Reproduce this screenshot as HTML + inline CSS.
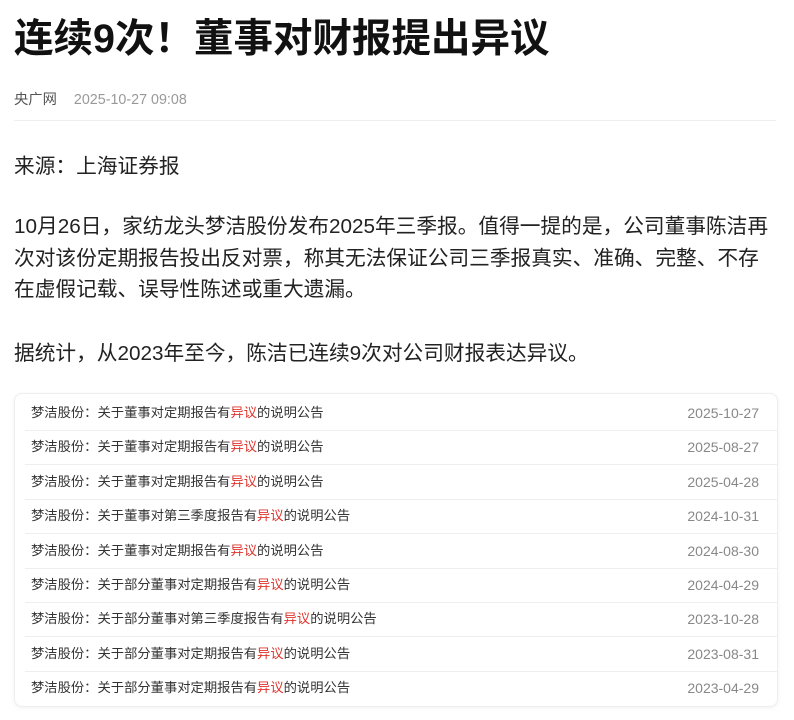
<!DOCTYPE html>
<html><head><meta charset="utf-8"><style>
body{margin:0;background:#fff;width:794px;height:720px;overflow:hidden;font-family:"Liberation Sans","Noto Sans CJK SC",sans-serif;}
.t{position:absolute;left:14px;top:7px;font-size:39.5px;font-weight:bold;color:#111;white-space:nowrap}
.meta{position:absolute;left:14px;top:88px;font-size:14.3px;color:#555}
.meta span{color:#999;margin-left:17px}
.hr{position:absolute;left:14px;right:18px;top:120px;border-top:1px solid #eee}
.p{position:absolute;left:14px;width:790px;font-size:20.7px;color:#222;line-height:31.5px;white-space:nowrap}
.card{position:absolute;left:14px;top:393px;width:762px;height:312px;border:1px solid #eee;border-radius:8px;box-shadow:0 1px 4px rgba(0,0,0,0.06)}
.row{position:absolute;left:10px;right:0;height:34px;border-bottom:1px solid #eee;font-size:13.3px;color:#333;line-height:34px;padding-left:6px}
.row:last-child{border-bottom:none}
.row b{font-weight:normal;color:#e0342d}
.row i{font-style:normal;position:absolute;right:18px;color:#888;font-size:14px}
</style></head><body>
<div class="t">连续9次！董事对财报提出异议</div>
<div class="meta">央广网<span>2025-10-27 09:08</span></div>
<div class="hr"></div>
<div class="p" style="top:151px">来源：上海证券报</div>
<div class="p" style="top:211px">10月26日，家纺龙头梦洁股份发布2025年三季报。值得一提的是，公司董事陈洁再<br>次对该份定期报告投出反对票，称其无法保证公司三季报真实、准确、完整、不存<br>在虚假记载、误导性陈述或重大遗漏。</div>
<div class="p" style="top:338px">据统计，从2023年至今，陈洁已连续9次对公司财报表达异议。</div>
<div class="card">
<div class="row" style="top:2px">梦洁股份：关于董事对定期报告有<b>异议</b>的说明公告<i>2025-10-27</i></div>
<div class="row" style="top:36px">梦洁股份：关于董事对定期报告有<b>异议</b>的说明公告<i>2025-08-27</i></div>
<div class="row" style="top:71px">梦洁股份：关于董事对定期报告有<b>异议</b>的说明公告<i>2025-04-28</i></div>
<div class="row" style="top:105px">梦洁股份：关于董事对第三季度报告有<b>异议</b>的说明公告<i>2024-10-31</i></div>
<div class="row" style="top:140px">梦洁股份：关于董事对定期报告有<b>异议</b>的说明公告<i>2024-08-30</i></div>
<div class="row" style="top:174px">梦洁股份：关于部分董事对定期报告有<b>异议</b>的说明公告<i>2024-04-29</i></div>
<div class="row" style="top:208px">梦洁股份：关于部分董事对第三季度报告有<b>异议</b>的说明公告<i>2023-10-28</i></div>
<div class="row" style="top:243px">梦洁股份：关于部分董事对定期报告有<b>异议</b>的说明公告<i>2023-08-31</i></div>
<div class="row" style="top:277px">梦洁股份：关于部分董事对定期报告有<b>异议</b>的说明公告<i>2023-04-29</i></div>
</div>
</body></html>
